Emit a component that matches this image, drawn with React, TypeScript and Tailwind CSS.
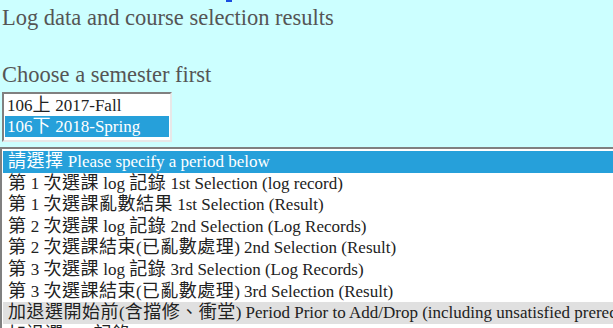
import React from "react";

const font = { fontFamily: '"Liberation Serif", "Noto Sans CJK TC", serif' };

const periods = [
  "請選擇 Please specify a period below",
  "第 1 次選課 log 記錄 1st Selection (log record)",
  "第 1 次選課亂數結果 1st Selection (Result)",
  "第 2 次選課 log 記錄 2nd Selection (Log Records)",
  "第 2 次選課結束(已亂數處理) 2nd Selection (Result)",
  "第 3 次選課 log 記錄 3rd Selection (Log Records)",
  "第 3 次選課結束(已亂數處理) 3rd Selection (Result)",
  "加退選開始前(含擋修、衝堂) Period Prior to Add/Drop (including unsatisfied prerequisites and time conflicts)",
  "加退選 log 記錄 Add/Drop Period Selection (Log Records)",
];

function Mixed({ text }: { text: string }) {
  const parts = text.split(/([\u3000-\u9fff\uff00-\uffef]+)/);
  return (
    <>
      {parts.map((p, i) =>
        /[\u3000-\u9fff\uff00-\uffef]/.test(p) ? (
          <span key={i} className="text-[18px] tracking-[0.5px]">
            {p}
          </span>
        ) : (
          <span key={i}>{p}</span>
        )
      )}
    </>
  );
}

export default function App() {
  return (
    <div className="w-[613px] h-[328px] overflow-hidden bg-[#ccffff]" style={font}>
      <div className="h-[2px] ml-[226px] w-[6px] bg-[#1a4de0]" />
      <div className="pl-[2px] pt-[3px] text-[22.5px] leading-[26px] text-[#555555] whitespace-nowrap">
        Log data and course selection results
      </div>
      <div className="pl-[2px] mt-[31px] text-[22.5px] leading-[26px] text-[#555555] whitespace-nowrap">
        Choose a semester first
      </div>
      <div className="ml-[2px] mt-[4px] w-[170px] h-[50px] border-2 border-t-[#808080] border-l-[#808080] border-b-[#e8e8e8] border-r-[#e8e8e8] bg-white p-px text-[17px] leading-[21px] whitespace-nowrap overflow-hidden">
        <div className="h-[21px] pl-[2px] text-[#222222]">
          <Mixed text="106上 2017-Fall" />
        </div>
        <div className="h-[21px] pl-[2px] bg-[#26a0da] text-white">
          <Mixed text="106下 2018-Spring" />
        </div>
      </div>
      <div className="mt-[5px] w-[640px] h-[200px] border-t-2 border-l-2 border-t-[#808080] border-l-[#808080] bg-white pt-[2px] pl-px text-[17px] whitespace-nowrap overflow-hidden">
        {periods.map((p, i) => (
          <div
            key={i}
            className={
              "h-[21.6px] leading-[21.6px] pl-[5px] " +
              (i === 0 ? "bg-[#26a0da] text-white" : i === 7 ? "bg-[#e0e0e0] text-[#222222]" : "text-[#222222]")
            }
          >
            <Mixed text={p} />
          </div>
        ))}
      </div>
    </div>
  );
}
